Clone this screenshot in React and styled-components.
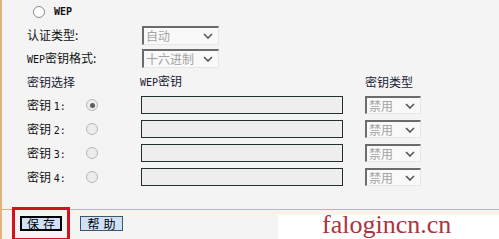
import React from "react";
import styled, { createGlobalStyle } from "styled-components";

const GlobalStyle = createGlobalStyle`
  body {
    margin: 0;
    background: #f4f4f4;
    font-family: "Noto Sans CJK SC", "DejaVu Sans", sans-serif;
  }
`;

const Page = styled.div`
  position: relative;
  width: 497px;
  height: 239px;
  overflow: hidden;
  border-left: 2px solid #e2b47a;
  background: #f4f4f4;
  font-size: 12px;
  color: #111;
`;

const Form = styled.div`
  padding-left: 25px;
`;

const Row = styled.div`
  display: flex;
  align-items: center;
  height: ${(p) => p.h || 24}px;
  white-space: nowrap;
  line-height: 1;
`;

const Label = styled.div`
  width: ${(p) => p.w}px;
  flex-shrink: 0;
  color: ${(p) => (p.head ? "#1a1a33" : "#111")};
`;

const Mono = styled.span`
  font-family: "DejaVu Sans Mono", monospace;
  font-size: 10px;
  font-weight: ${(p) => (p.bold ? 700 : 400)};
`;

const Radio = styled.span`
  display: inline-block;
  box-sizing: border-box;
  width: 12px;
  height: 12px;
  border-radius: 50%;
  flex-shrink: 0;
  border: 1px solid ${(p) => (p.enabled ? "#8a8a8a" : "#b9b9b9")};
  background: ${(p) => (p.enabled ? "#ffffff" : "#ececec")};
  margin-left: ${(p) => p.ml || 0}px;
  position: relative;

  &::after {
    content: "";
    display: ${(p) => (p.checked ? "block" : "none")};
    position: absolute;
    left: 2.5px;
    top: 2.5px;
    width: 5px;
    height: 5px;
    border-radius: 50%;
    background: #5c5c5c;
  }
`;

const Select = styled.div`
  box-sizing: border-box;
  display: flex;
  align-items: center;
  justify-content: space-between;
  width: ${(p) => p.w}px;
  height: ${(p) => p.hgt || 19}px;
  border-top: 2px solid #6b6b6b;
  border-left: 2px solid #6b6b6b;
  border-right: 1px solid #e6e6e6;
  border-bottom: 1px solid #e6e6e6;
  background: #f9f9f9;
  color: #a3a3a3;
  padding: 0 5px 0 2px;
  font-size: 12px;
`;

const TextBox = styled.div`
  box-sizing: border-box;
  width: 202px;
  height: 18px;
  border: 1px solid #22302f;
  background: #eeeeee;
  margin-left: ${(p) => p.ml}px;
`;

const Divider = styled.div`
  margin-top: 20px;
  height: 1px;
  background: #e0b07a;
`;

const ButtonBar = styled.div`
  display: flex;
  align-items: center;
  gap: 18px;
  padding: 6px 0 0 18px;
`;

const Button = styled.div`
  box-sizing: border-box;
  display: flex;
  align-items: center;
  justify-content: center;
  width: ${(p) => p.w}px;
  height: 15px;
  background: #cfe1f7;
  border: ${(p) => (p.focused ? "2px solid #000" : "1px solid #44546a")};
  font-size: 12px;
  line-height: 1;
  white-space: nowrap;
  letter-spacing: 4px;
  padding-left: 4px;
  color: #000;
`;

const Highlight = styled.div`
  position: absolute;
  left: 10px;
  top: 207px;
  width: 58px;
  height: 34px;
  box-sizing: border-box;
  border: 3px solid #d3121b;
`;

const Watermark = styled.div`
  position: absolute;
  left: 276px;
  top: 215px;
  width: 221px;
  height: 24px;
  background: #ffffff;
  font-family: "Liberation Serif", serif;
  font-size: 26px;
  line-height: 20px;
  color: #ac3440;
  padding-left: 44px;
  box-sizing: border-box;
  white-space: nowrap;
`;

const Chevron = () => (
  <svg width="10" height="6" viewBox="0 0 10 6">
    <path d="M1 1 L5 5 L9 1" fill="none" stroke="#555" strokeWidth="1.6" />
  </svg>
);

const keys = [1, 2, 3, 4];

export default function App() {
  return (
    <>
      <GlobalStyle />
      <Page>
        <Form>
          <Row h={23}>
            <Radio enabled ml={6} />
            <Mono bold style={{ marginLeft: 9 }}>WEP</Mono>
          </Row>
          <Row h={24}>
            <Label w={115}>认证类型:</Label>
            <Select w={77}>
              自动
              <Chevron />
            </Select>
          </Row>
          <Row h={23}>
            <Label w={115}>
              <Mono>WEP</Mono>密钥格式:
            </Label>
            <Select w={77}>
              十六进制
              <Chevron />
            </Select>
          </Row>
          <Row h={23}>
            <Label w={113} head>密钥选择</Label>
            <Label w={225} head>
              <Mono>WEP</Mono>密钥
            </Label>
            <Label w={60} head>密钥类型</Label>
          </Row>
          {keys.map((k) => (
            <Row h={24} key={k}>
              <Label w={59}>
                密钥 <Mono>{k}:</Mono>
              </Label>
              <Radio checked={k === 1} />
              <TextBox ml={43} />
              <Select w={56} hgt={18} style={{ marginLeft: 22 }}>
                禁用
                <Chevron />
              </Select>
            </Row>
          ))}
        </Form>
        <Divider />
        <ButtonBar>
          <Button w={42} focused>
            保存
          </Button>
          <Button w={43}>帮助</Button>
        </ButtonBar>
        <Highlight />
        <Watermark>falogincn.cn</Watermark>
      </Page>
    </>
  );
}
